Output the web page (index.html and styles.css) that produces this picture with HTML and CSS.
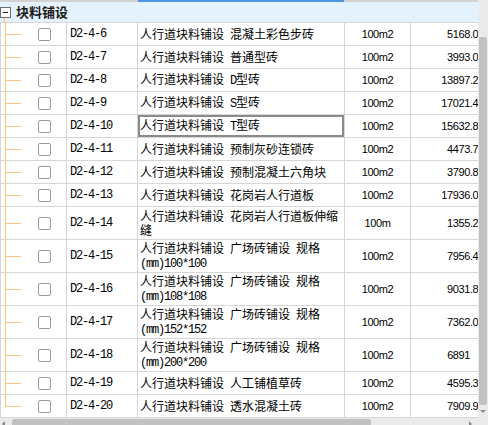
FILE: index.html
```html
<!DOCTYPE html>
<html lang="zh">
<head>
<meta charset="utf-8">
<link rel="stylesheet" href="styles.css">
</head>
<body>
<div class="view">
  <div class="main">
    <div class="topline"><span class="sel"></span></div>
    <div class="group"><span class="toggle"></span><span class="gtitle">块料铺设</span></div>
    <div class="rows">
      <div class="row"><div class="c tree"><span class="cb"></span></div><div class="c code">D2-4-6</div><div class="c desc"><span><span class="pre">人行道块料铺设</span>混凝土彩色步砖</span></div><div class="c unit">100m2</div><div class="c num">5168.05</div></div>
      <div class="row"><div class="c tree"><span class="cb"></span></div><div class="c code">D2-4-7</div><div class="c desc"><span><span class="pre">人行道块料铺设</span>普通型砖</span></div><div class="c unit">100m2</div><div class="c num">3993.04</div></div>
      <div class="row"><div class="c tree"><span class="cb"></span></div><div class="c code">D2-4-8</div><div class="c desc"><span><span class="pre">人行道块料铺设</span><span class="a">D</span>型砖</span></div><div class="c unit">100m2</div><div class="c num">13897.25</div></div>
      <div class="row"><div class="c tree"><span class="cb"></span></div><div class="c code">D2-4-9</div><div class="c desc"><span><span class="pre">人行道块料铺设</span><span class="a">S</span>型砖</span></div><div class="c unit">100m2</div><div class="c num">17021.46</div></div>
      <div class="row"><div class="c tree"><span class="cb"></span></div><div class="c code">D2-4-10</div><div class="c desc selected"><span><span class="pre">人行道块料铺设</span><span class="a">T</span>型砖</span></div><div class="c unit">100m2</div><div class="c num">15632.88</div></div>
      <div class="row"><div class="c tree"><span class="cb"></span></div><div class="c code">D2-4-11</div><div class="c desc"><span><span class="pre">人行道块料铺设</span>预制灰砂连锁砖</span></div><div class="c unit">100m2</div><div class="c num">4473.71</div></div>
      <div class="row"><div class="c tree"><span class="cb"></span></div><div class="c code">D2-4-12</div><div class="c desc"><span><span class="pre">人行道块料铺设</span>预制混凝土六角块</span></div><div class="c unit">100m2</div><div class="c num">3790.83</div></div>
      <div class="row"><div class="c tree"><span class="cb"></span></div><div class="c code">D2-4-13</div><div class="c desc"><span><span class="pre">人行道块料铺设</span>花岗岩人行道板</span></div><div class="c unit">100m2</div><div class="c num">17936.02</div></div>
      <div class="row tall"><div class="c tree"><span class="cb"></span></div><div class="c code">D2-4-14</div><div class="c desc"><span><span class="pre">人行道块料铺设</span>花岗岩人行道板伸缩<br>缝</span></div><div class="c unit">100m</div><div class="c num">1355.27</div></div>
      <div class="row tall"><div class="c tree"><span class="cb"></span></div><div class="c code">D2-4-15</div><div class="c desc"><span><span class="pre">人行道块料铺设</span><span class="pre">广场砖铺设</span>规格<br><span class="a">(mm)100*100</span></span></div><div class="c unit">100m2</div><div class="c num">7956.40</div></div>
      <div class="row tall"><div class="c tree"><span class="cb"></span></div><div class="c code">D2-4-16</div><div class="c desc"><span><span class="pre">人行道块料铺设</span><span class="pre">广场砖铺设</span>规格<br><span class="a">(mm)108*108</span></span></div><div class="c unit">100m2</div><div class="c num">9031.82</div></div>
      <div class="row tall"><div class="c tree"><span class="cb"></span></div><div class="c code">D2-4-17</div><div class="c desc"><span><span class="pre">人行道块料铺设</span><span class="pre">广场砖铺设</span>规格<br><span class="a">(mm)152*152</span></span></div><div class="c unit">100m2</div><div class="c num">7362.06</div></div>
      <div class="row tall"><div class="c tree"><span class="cb"></span></div><div class="c code">D2-4-18</div><div class="c desc"><span><span class="pre">人行道块料铺设</span><span class="pre">广场砖铺设</span>规格<br><span class="a">(mm)200*200</span></span></div><div class="c unit">100m2</div><div class="c num int">6891</div></div>
      <div class="row"><div class="c tree"><span class="cb"></span></div><div class="c code">D2-4-19</div><div class="c desc"><span><span class="pre">人行道块料铺设</span>人工铺植草砖</span></div><div class="c unit">100m2</div><div class="c num">4595.37</div></div>
      <div class="row last"><div class="c tree"><span class="cb"></span></div><div class="c code">D2-4-20</div><div class="c desc"><span><span class="pre">人行道块料铺设</span>透水混凝土砖</span></div><div class="c unit">100m2</div><div class="c num">7909.95</div></div>
    </div>
  </div>
  <div class="vscroll"><div class="vthumb"></div><span class="varrow"></span></div>
  <div class="hscroll"><span class="harrow left"></span><div class="hthumb"></div><span class="harrow right"></span></div>
  <div class="corner"></div>
</div>
</body>
</html>
```
FILE: styles.css
```css
html, body {
  margin: 0;
  padding: 0;
  background: #ffffff;
}
body {
  font-family: "Noto Sans CJK SC", "Liberation Sans", sans-serif;
  color: #000;
}
.view {
  width: 488px;
  height: 425px;
  display: grid;
  grid-template-columns: 478px 10px;
  grid-template-rows: 418px 7px;
  overflow: hidden;
}
.main {
  display: flex;
  flex-direction: column;
  overflow: hidden;
  min-width: 0;
}
.topline {
  height: 2px;
  flex: none;
  background: #d2d2d2;
  display: flex;
}
.sel {
  margin-left: 138px;
  width: 206px;
  background: #4b97e3;
}
.group {
  height: 21px;
  flex: none;
  box-sizing: border-box;
  background: #e4f2fe;
  border-bottom: 1px solid #d6d6d6;
  display: flex;
  align-items: center;
  position: relative;
}
.toggle {
  width: 11px;
  height: 11px;
  box-sizing: border-box;
  border: 1px solid #6d6d6d;
  background: #fafafa;
  position: relative;
  margin-top: 1px;
}
.toggle::after {
  content: "";
  position: absolute;
  left: 2px;
  right: 2px;
  top: 4px;
  height: 1px;
  background: #222;
}
.group::after {
  content: "";
  position: absolute;
  left: 4px;
  width: 1px;
  top: 16px;
  bottom: -1px;
  background: #fbc679;
}
.gtitle {
  margin-left: 5px;
  font-size: 13px;
  font-weight: bold;
  color: #1a1a1a;
  line-height: 16px;
}
.rows {
  display: flex;
  flex-direction: column;
  width: 490px;
}
.row {
  display: grid;
  grid-template-columns: 67px 71px 207px 66px 80px;
  height: 23px;
  box-sizing: border-box;
  border-bottom: 1px solid #d6d6d6;
  flex: none;
}
.row.tall {
  height: 33px;
}
.c {
  box-sizing: border-box;
  border-right: 1px solid #d6d6d6;
  display: flex;
  align-items: center;
  overflow: hidden;
  white-space: nowrap;
}
.tree {
  border-left: 1px solid #d6d6d6;
  padding-left: 37px;
  position: relative;
  overflow: visible;
}
.tree::before {
  content: "";
  position: absolute;
  left: 4px;
  top: -1px;
  bottom: -1px;
  width: 1px;
  background: #fbc679;
}
.row.last .tree::before {
  bottom: 50%;
}
.tree::after {
  content: "";
  position: absolute;
  left: 4px;
  width: 16px;
  top: 50%;
  height: 1px;
  background: #fbc679;
}
.cb {
  width: 13px;
  height: 13px;
  box-sizing: border-box;
  border: 1px solid #9a9a9a;
  border-radius: 2px;
  background: #fff;
}
.code {
  padding-left: 3px;
  font-family: "Liberation Mono", monospace;
  font-size: 12px;
  letter-spacing: -1.2px;
}
.desc {
  padding-left: 2px;
  font-size: 12px;
  line-height: 14px;
}
.desc.selected {
  box-shadow: inset 0 0 0 2px #8a8a8a;
}
.pre {
  margin-right: 6px;
}
.a {
  font-family: "Liberation Mono", monospace;
  font-size: 12px;
  letter-spacing: -1.2px;
}
.unit {
  justify-content: center;
  font-family: "Liberation Sans", sans-serif;
  font-size: 11px;
  letter-spacing: -0.4px;
}
.num {
  justify-content: flex-end;
  padding-right: 6px;
  font-family: "Liberation Sans", sans-serif;
  font-size: 11px;
  letter-spacing: -0.4px;
}
.num.int {
  padding-right: 20px;
}
.vscroll {
  background: #ebebeb;
  display: flex;
  flex-direction: column;
  align-items: center;
}
.vthumb {
  margin-top: 37px;
  width: 8px;
  height: 368px;
  background: #c2c2c2;
  border-radius: 2px;
}
.varrow {
  margin-top: 5px;
  width: 0;
  height: 0;
  border-left: 3px solid transparent;
  border-right: 3px solid transparent;
  border-top: 3px solid #8a8a8a;
}
.hscroll {
  background: #ebebeb;
  display: flex;
  align-items: flex-start;
  padding-top: 1px;
  box-sizing: border-box;
}
.hthumb {
  margin-left: 7px;
  width: 359px;
  height: 8px;
  background: #c2c2c2;
  border-radius: 2px;
}
.harrow {
  width: 0;
  height: 0;
  margin-top: 2px;
  border-top: 3px solid transparent;
  border-bottom: 3px solid transparent;
}
.harrow.left {
  margin-left: 2px;
  border-right: 3px solid #8a8a8a;
}
.harrow.right {
  margin-left: 98px;
  border-left: 3px solid #8a8a8a;
}
.corner {
  background: #ebebeb;
}
```
